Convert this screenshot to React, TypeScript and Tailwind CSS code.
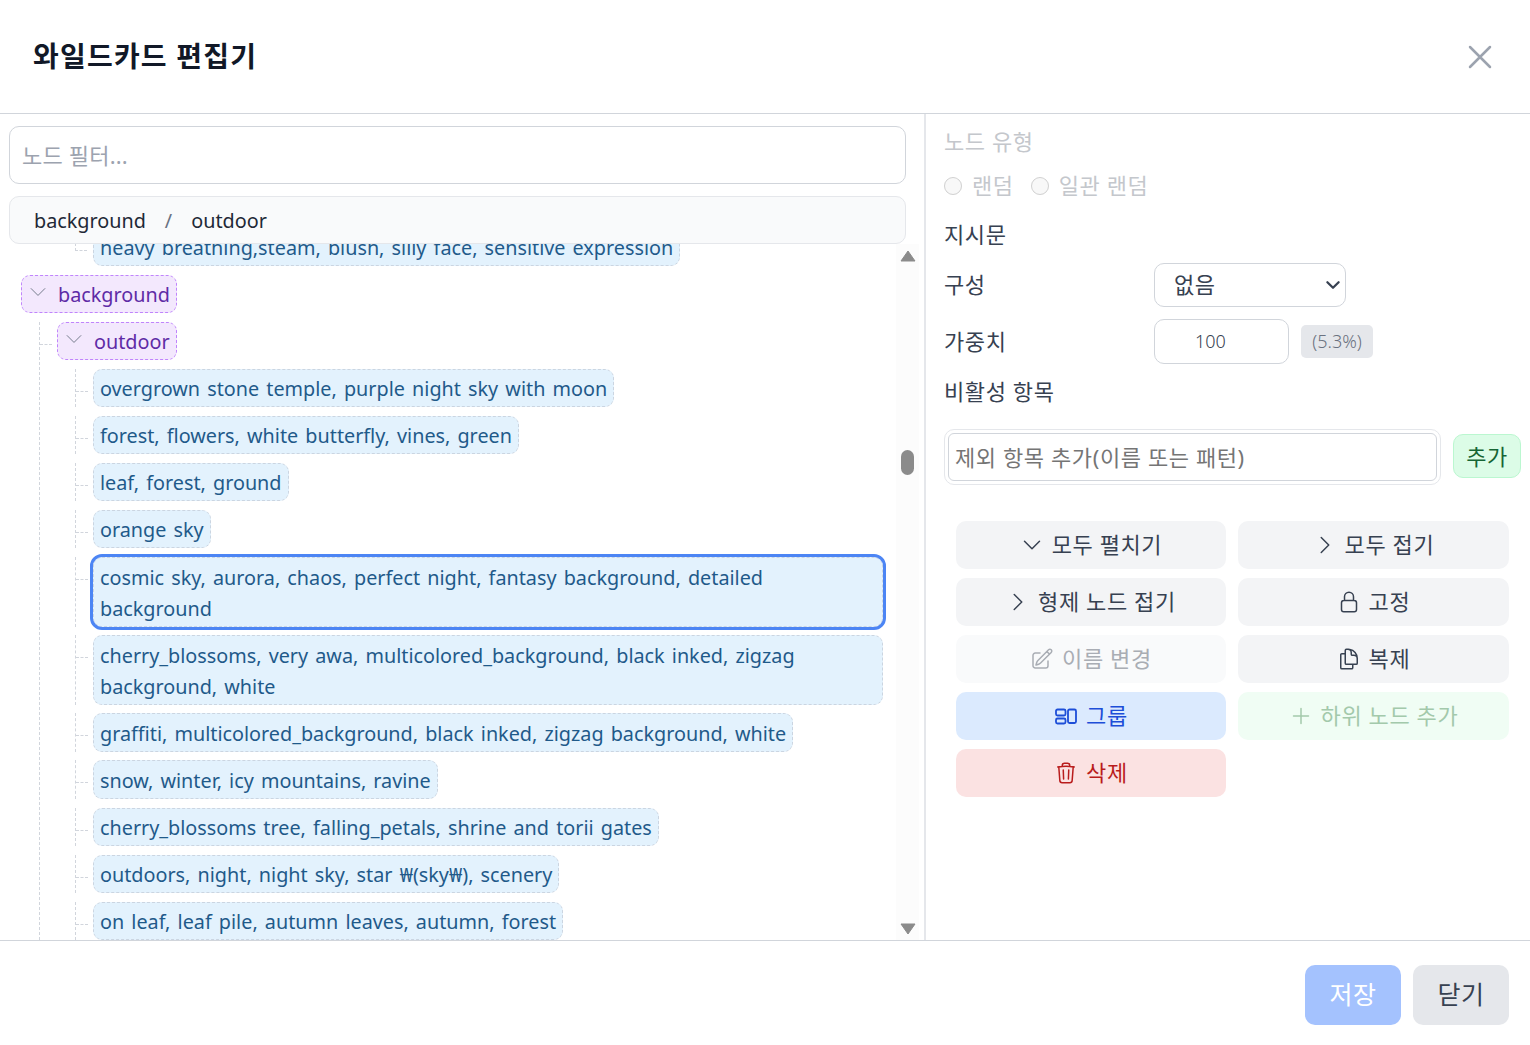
import { HiOutlineChevronDown, HiOutlineChevronRight, HiOutlineDocumentDuplicate, HiOutlineLockClosed, HiOutlinePencilSquare, HiOutlinePlus, HiOutlineTrash, HiOutlineXMark } from "react-icons/hi2";

const font = "[font-family:'Noto_Sans','Noto_Sans_CJK_KR',sans-serif]";
// latin labels run narrower than the korean ones, with wider spaces
const latin = "text-[19.8px] tracking-normal [word-spacing:2px]";

const leaves = [
  "overgrown stone temple, purple night sky with moon",
  "forest, flowers, white butterfly, vines, green",
  "leaf, forest, ground",
  "orange sky",
  "cosmic sky, aurora, chaos, perfect night, fantasy background, detailed background",
  "cherry_blossoms, very awa, multicolored_background, black inked, zigzag background, white",
  "graffiti, multicolored_background, black inked, zigzag background, white",
  "snow, winter, icy mountains, ravine",
  "cherry_blossoms tree, falling_petals, shrine and torii gates",
  "outdoors, night, night sky, star ₩(sky₩), scenery",
  "on leaf, leaf pile, autumn leaves, autumn, forest",
];

function GroupIcon() {
  return (
    <svg viewBox="0 0 24 24" className="h-[24px] w-[24px]" fill="none" stroke="currentColor" strokeWidth="1.8">
      <rect x="2" y="5.5" width="9.5" height="6" rx="1.5" />
      <rect x="2" y="14.5" width="9.5" height="5" rx="1.5" />
      <rect x="14" y="5.5" width="8" height="13.5" rx="1.5" />
    </svg>
  );
}

function Leaf({ text, selected, last }: { text: string; selected?: boolean; last?: boolean }) {
  return (
    <div className="flex">
      <div className={`ml-[-18px] w-[18px] shrink-0 ${last ? "" : "border-l border-dashed border-gray-300"}`}>
        <div className={`h-[23px] w-[12px] border-b border-dashed border-gray-300 ${last ? "border-l" : ""}`} />
      </div>
      <div
        className={`w-fit rounded-[9px] border border-dashed border-[#cbd5e1] bg-[#e3f2fd] px-[6px] py-[2.6px] text-[#1f5a8a] ${latin} ${
          selected ? "outline-[3px] outline-[#4c85f4]" : ""
        }`}
      >
        <div className="translate-y-[1px]">{text}</div>
      </div>
    </div>
  );
}

function Folder({ name }: { name: string }) {
  return (
    <div className={`flex w-fit items-center rounded-[9px] border border-dashed border-[#c084fc] bg-[#f3e8fd] px-[6px] py-[2.6px] text-[#5f2ba6] ${latin}`}>
      <span className="mb-[4px] mr-[10px] flex w-[20px] justify-center text-gray-500">
        <HiOutlineChevronDown strokeWidth={1} className="h-[22px] w-[22px] shrink-0" />
      </span>
      <span className="translate-y-[1px]">{name}</span>
    </div>
  );
}

function Action({ icon, label, className }: { icon: React.ReactNode; label: string; className: string }) {
  return (
    <button className={`flex h-[48px] items-center justify-center gap-[7.8px] rounded-[10px] ${className}`}>
      {icon}
      {label}
    </button>
  );
}

function ScrollTrack() {
  return (
    <div className="flex w-[23px] shrink-0 flex-col items-center bg-[#fcfcfc] pt-[6px]">
      <svg viewBox="0 0 16 12" className="h-[12px] w-[16px] text-[#8b8b8b]" fill="currentColor">
        <path d="M8 1 L15 11 H1 Z" stroke="currentColor" strokeLinejoin="round" />
      </svg>
      <div className="mt-[188px] h-[25px] w-[13px] rounded-full bg-[#8b8b8b]" />
      <div className="flex-1" />
      <svg viewBox="0 0 16 12" className="mb-[5px] h-[12px] w-[16px] text-[#8b8b8b]" fill="currentColor">
        <path d="M8 11 L15 1 H1 Z" stroke="currentColor" strokeLinejoin="round" />
      </svg>
    </div>
  );
}

export default function App() {
  return (
    <div className={`flex h-[1045px] w-[1530px] flex-col overflow-hidden bg-white text-[22px] leading-[31.2px] tracking-[0.6px] text-[#374151] ${font}`}>
      <div className="flex h-[114px] shrink-0 items-center justify-between border-b border-[#d1d5db] pl-[33px] pr-[30px]">
        <h1 className="text-[28px] font-bold tracking-[1.2px] text-[#111827]">와일드카드 편집기</h1>
        <HiOutlineXMark className="h-[40px] w-[40px] text-[#9ca3af]" />
      </div>

      <div className="flex min-h-0 flex-1">
        <div className="flex w-[926px] shrink-0 flex-col border-r-2 border-[#e5e7eb] pt-[12px]">
          <input
            readOnly
            placeholder="노드 필터..."
            className="mx-[9px] h-[58px] w-[897px] shrink-0 rounded-[10px] border border-[#d1d5db] px-[12px] tracking-[0.2px] placeholder:text-[#9ca3af]"
          />
          <div className={`mx-[9px] mt-[12px] flex h-[48px] w-[897px] shrink-0 items-center rounded-[10px] border border-[#e5e7eb] bg-[#f9fafb] px-[24px] text-[#1f2937] ${latin}`}>
            <span className="translate-y-[1px]">background</span>
            <span className="mx-[19px] translate-y-[1px] text-gray-500">/</span>
            <span className="translate-y-[1px]">outdoor</span>
          </div>
          <div className="flex min-h-0 flex-1">
            <div className="min-w-0 flex-1 overflow-hidden pl-[21px] pr-[13px]">
              <div className="mt-[-16.4px] pl-[72px]">
                <Leaf last text="heavy breathing,steam, blush, silly face, sensitive expression" />
              </div>
              <div className="mt-[8.66px]">
                <Folder name="background" />
              </div>
              <div className="ml-[18px] mt-[8.66px] border-l border-dashed border-gray-300">
                <div className="flex">
                  <div className="h-[23px] w-[12px] shrink-0 border-b border-dashed border-gray-300" />
                  <div className="ml-[5px]">
                    <Folder name="outdoor" />
                  </div>
                </div>
                <div className="mt-[8.66px] flex flex-col gap-[8.66px] pl-[53px]">
                  {leaves.map((leaf, i) => (
                    <Leaf key={leaf} text={leaf} selected={i === 4} />
                  ))}
                </div>
              </div>
            </div>
            <ScrollTrack />
            <div className="w-[5px] shrink-0" />
          </div>
        </div>

        <div className="flex min-w-0 flex-1 flex-col pl-[18px] pr-[9px]">
          <div className="mt-[12px] text-[#c4c7cc]">노드 유형</div>
          <div className="mt-[13px] flex items-center text-[#c4c7cc]">
            <input type="radio" disabled className="mr-[10px] h-[18px] w-[18px]" />
            랜덤
            <input type="radio" disabled className="ml-[17px] mr-[10px] h-[18px] w-[18px]" />
            일관 랜덤
          </div>
          <div className="mt-[18px]">지시문</div>
          <div className="mt-[12px] flex h-[44px] items-center">
            <span className="w-[210px]">구성</span>
            <div className="relative">
              <select className="h-[44px] w-[192px] appearance-none rounded-[10px] border border-[#d1d5db] bg-white pl-[19px]">
                <option>없음</option>
              </select>
              <HiOutlineChevronDown strokeWidth={3} className="pointer-events-none absolute right-[4px] top-[13px] h-[18px] w-[18px] text-[#374151]" />
            </div>
          </div>
          <div className="mt-[12px] flex h-[45px] items-center">
            <span className="w-[210px]">가중치</span>
            <input
              readOnly
              value="100"
              className="h-[45px] w-[135px] rounded-[10px] border border-[#d1d5db] pl-[40px] text-[18px] font-light tracking-normal text-[#374151]"
            />
            <span className="ml-[12px] flex h-[33px] w-[72px] items-center justify-center rounded-[5px] bg-[#e5e7eb] text-[18px] font-light tracking-normal text-[#6b7280]">
              (5.3%)
            </span>
          </div>
          <div className="mt-[12px]">비활성 항목</div>
          <div className="mt-[22px] flex items-center">
            <div className="w-[497px] shrink-0 rounded-[10px] border border-[#e5e7eb] p-[3px]">
              <input
                readOnly
                placeholder="제외 항목 추가(이름 또는 패턴)"
                className="h-[48px] w-full rounded-[6px] border border-[#d1d5db] px-[6px] placeholder:text-[#757575]"
              />
            </div>
            <button className="mb-[1px] ml-[12px] h-[44px] w-[68px] rounded-[10px] border border-[#bbf7d0] bg-[#dcfce7] text-[#166534]">
              추가
            </button>
          </div>

          <div className="ml-[12px] mt-[36px] grid w-[553px] grid-cols-[270px_271px] gap-x-[12px] gap-y-[9px]">
            <Action label="모두 펼치기" className="bg-[#f3f4f6]" icon={<HiOutlineChevronDown className="h-[24px] w-[24px]" />} />
            <Action label="모두 접기" className="bg-[#f3f4f6]" icon={<HiOutlineChevronRight className="h-[24px] w-[24px]" />} />
            <Action label="형제 노드 접기" className="bg-[#f3f4f6]" icon={<HiOutlineChevronRight className="h-[24px] w-[24px]" />} />
            <Action label="고정" className="bg-[#f3f4f6]" icon={<HiOutlineLockClosed className="h-[24px] w-[24px]" />} />
            <Action label="이름 변경" className="bg-[#f9fafb] text-[#a9adb4]" icon={<HiOutlinePencilSquare className="h-[24px] w-[24px]" />} />
            <Action label="복제" className="bg-[#f3f4f6]" icon={<HiOutlineDocumentDuplicate className="h-[24px] w-[24px]" />} />
            <Action label="그룹" className="bg-[#dbeafe] text-[#1d4ed8]" icon={<GroupIcon />} />
            <Action label="하위 노드 추가" className="bg-[#f0fdf4] text-[#a3c9ab]" icon={<HiOutlinePlus className="h-[24px] w-[24px]" />} />
            <Action label="삭제" className="bg-[#fbe2e2] text-[#b91c1c]" icon={<HiOutlineTrash className="h-[24px] w-[24px]" />} />
          </div>
        </div>
      </div>

      <div className="flex h-[105px] shrink-0 items-center justify-end gap-[12px] border-t border-[#d1d5db] pr-[21px] pt-[4px]">
        <button className="h-[60px] w-[96px] rounded-[10px] bg-[#a4c2fe] text-[25px] tracking-[0.5px] text-white">저장</button>
        <button className="h-[60px] w-[96px] rounded-[10px] bg-[#e5e7eb] text-[25px] tracking-[0.5px] text-[#374151]">닫기</button>
      </div>
    </div>
  );
}
